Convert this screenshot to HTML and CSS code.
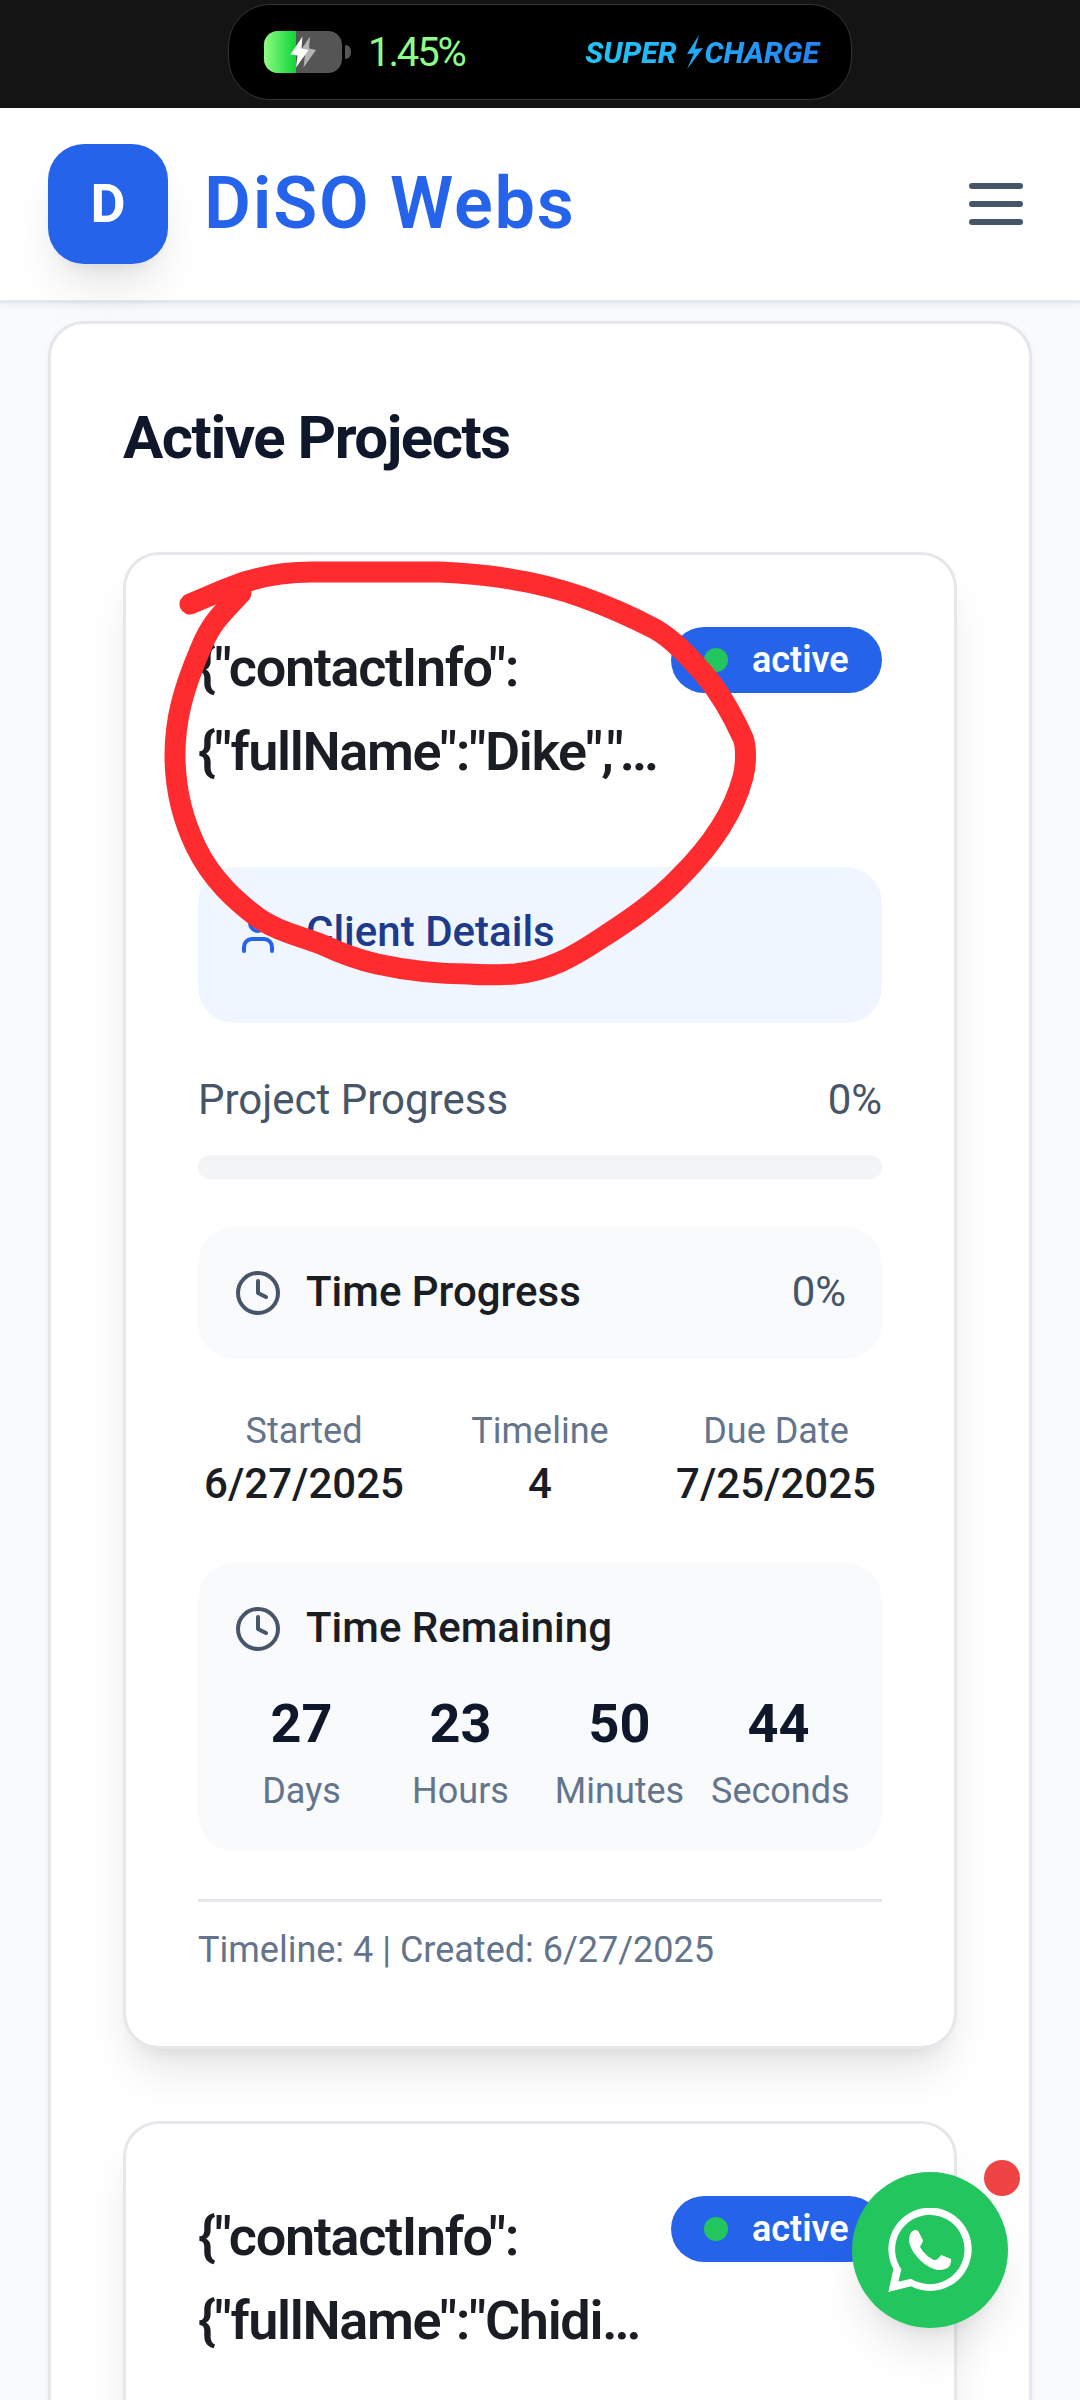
FILE: index.html
```html
<!DOCTYPE html>
<html lang="en">
<head>
<meta charset="utf-8">
<title>DiSO Webs</title>
<link rel="stylesheet" href="styles.css">
</head>
<body>
<div class="screen">
  <div class="status">
    <div class="pill">
      <svg class="battery" width="88" height="42" viewBox="0 0 88 42">
        <defs>
          <linearGradient id="charge"><stop offset="0" stop-color="#8dfc82"/><stop offset="1" stop-color="#10d43a"/></linearGradient>
          <clipPath id="shell"><rect width="78" height="42" rx="14"/></clipPath>
        </defs>
        <g clip-path="url(#shell)"><rect width="78" height="42" fill="#555"/><rect width="32" height="42" fill="url(#charge)"/></g>
        <path d="M81 14q6 0 6 7t-6 7z" fill="#555"/>
        <path d="M46 5.500L34 23.500L41 24.500L39.500 36.500L52 19L45 17.500Z" fill="#b4b4b4"/>
        <path d="M38.500 5.500L26.500 23.500L33.500 24.500L32 36.500L44.500 19L37.500 17.500Z" fill="#fff"/>
      </svg>
      <span class="percent">1.45%</span>
      <span class="super"><span class="super-a">SUPER</span><svg width="18" height="34" viewBox="0 0 18 34"><path d="M13 0L1 19L8 18.500L1 34L17 13L9 14Z" fill="#22aaf6"/></svg><span class="super-b">CHARGE</span></span>
    </div>
  </div>

  <header class="header">
    <div class="logo">D</div>
    <div class="brand">DiSO Webs</div>
    <div class="menu"><i></i><i></i><i></i></div>
  </header>

  <main class="main">
    <section class="panel">
      <h2 class="panel-title">Active Projects</h2>

      <article class="card">
        <div class="card-head">
          <h3 class="card-title">{"contactInfo":<br>{"fullName":"Dike","<span class="tail">…</span></h3>
          <span class="badge"><i class="dot"></i>active</span>
        </div>
        <div class="client">
          <div class="row">
            <svg class="icon user" viewBox="0 0 24 24"><path d="M19 21v-2a4 4 0 0 0-4-4H9a4 4 0 0 0-4 4v2"/><circle cx="12" cy="7" r="4"/></svg>
            <span>Client Details</span>
          </div>
        </div>
        <div class="progress">
          <div class="between"><span>Project Progress</span><span>0%</span></div>
          <div class="track"></div>
        </div>
        <div class="box">
          <div class="row">
            <svg class="icon" viewBox="0 0 24 24"><circle cx="12" cy="12" r="10"/><path d="M12 6v6l4 2"/></svg>
            <span class="strong">Time Progress</span><span class="value">0%</span>
          </div>
        </div>
        <div class="dates">
          <div><div class="label">Started</div><div class="date">6/27/2025</div></div>
          <div><div class="label">Timeline</div><div class="date">4</div></div>
          <div><div class="label">Due Date</div><div class="date">7/25/2025</div></div>
        </div>
        <div class="box">
          <div class="row">
            <svg class="icon" viewBox="0 0 24 24"><circle cx="12" cy="12" r="10"/><path d="M12 6v6l4 2"/></svg>
            <span class="strong">Time Remaining</span>
          </div>
          <div class="countdown">
            <div><div class="num">27</div><div class="label">Days</div></div>
            <div><div class="num">23</div><div class="label">Hours</div></div>
            <div><div class="num">50</div><div class="label">Minutes</div></div>
            <div><div class="num">44</div><div class="label">Seconds</div></div>
          </div>
        </div>
        <div class="card-foot">Timeline: 4 | Created: 6/27/2025</div>
      </article>

      <article class="card">
        <div class="card-head">
          <h3 class="card-title">{"contactInfo":<br>{"fullName":"Chidi…</h3>
          <span class="badge"><i class="dot"></i>active</span>
        </div>
      </article>
    </section>
  </main>

  <svg class="scribble" width="620" height="460" viewBox="150 545 620 460">
    <path d="M190 604C215 594 232 585 252 580C272 574 292 572 312 572H439C490 574 540 582 582 597C610 607 632 617 655 629C674 640 688 656 704 674C722 695 734 718 743 738Q745.500 744 745.500 755Q745.500 768 743 777C734 812 712 845 680 877C655 903 628 921 600 939C573 957 548 971 515 974C498 975 480 975 468 974C435 974 400 969 377 964C355 959 340 953 323 945C300 936 276 931 257 917C236 901 212 880 196 847C182 818 175 785 175 755C175 720 183 690 200 650C212 620 224 612 241 593"/>
  </svg>

  <div class="chat">
    <svg width="84" height="84" viewBox="24 24 252 252" fill="#fff">
      <path fill-rule="evenodd" d="M25 276L40 207A125 125 0 1 1 93 259ZM55 245L93 236A104 104 0 1 0 64 208Z"/>
      <path d="M98 93Q107 87 115 94L129 121Q129 126 120 140Q134 166 160 179Q168 181 172 178L184 165L213 177Q214 198 201 205Q186 212 170 209C134 202 93 160 87 124Q86 102 98 93Z"/>
    </svg>
    <i class="alert"></i>
  </div>
</div>
</body>
</html>
```
FILE: styles.css
```css
* { box-sizing: border-box; margin: 0; }
body { background: #f8fafc; font-family: Roboto, "Liberation Sans", sans-serif; color: #1a1d23; }
.screen { position: relative; width: 1080px; height: 2400px; overflow: hidden; display: flex; flex-direction: column; }
svg { display: block; flex: none; }

.status { flex: none; height: 108px; background: #141414; display: flex; justify-content: center; padding-top: 4px; }
.pill { width: 624px; height: 96px; background: #000; border: 1.500px solid #30343b; border-radius: 42px; display: flex; align-items: center; padding: 0 30px 0 35px; }
.percent { margin-left: 16px; color: #8efc86; font-size: 40px; font-weight: 450; letter-spacing: -2.100px; }
.super { margin-left: auto; display: flex; align-items: center; font-size: 30px; font-weight: 800; font-style: italic; }
.super svg { margin: 0 1px 0 9px; }
.super-a, .super-b { color: transparent; background-clip: text; -webkit-background-clip: text; }
.super-a { background-image: linear-gradient(90deg, #20c6f6, #22b4f8); }
.super-b { background-image: linear-gradient(90deg, #22a8f6, #2382f2); padding-right: 2px; }

.header { position: relative; z-index: 2; flex: none; height: 195px; background: #fff; border-bottom: 3px solid #e2e8f0; box-shadow: 0 3px 6px rgba(0,0,0,.05); display: flex; align-items: center; padding: 0 57px 0 48px; }
.logo { width: 120px; height: 120px; border-radius: 36px; background: #2563eb; color: #fff; font-size: 54px; font-weight: 700; display: flex; align-items: center; justify-content: center; padding-bottom: 2px; box-shadow: 0 30px 45px -9px rgba(0,0,0,.1), 0 12px 18px -12px rgba(0,0,0,.1); }
.brand { margin-left: 36px; padding-bottom: 2px; color: #2563eb; font-size: 72px; font-weight: 600; letter-spacing: 1.800px; }
.menu { margin-left: auto; display: flex; flex-direction: column; gap: 12px; }
.menu i { width: 54px; height: 6px; border-radius: 3px; background: #475569; }

.main { flex: none; padding: 18px 48px 0; }
.panel { background: #fff; border: 3px solid #e5e7eb; border-radius: 36px; box-shadow: 0 3px 6px rgba(0,0,0,.05); padding: 72px; display: flex; flex-direction: column; gap: 72px; }
.panel-title { font-size: 60px; line-height: 84px; font-weight: 700; letter-spacing: -1.500px; color: #0f172a; }
.card { min-height: 400px; border: 3px solid #e5e7eb; border-radius: 36px; background: #fff; padding: 72px; box-shadow: 0 30px 45px -9px rgba(0,0,0,.1), 0 12px 18px -12px rgba(0,0,0,.1); }
.card-head { display: flex; justify-content: space-between; align-items: flex-start; margin-bottom: 72px; }
.card-title { margin: -1px 0 1px; font-size: 54px; line-height: 84px; font-weight: 600; letter-spacing: -1.350px; white-space: nowrap; }
.tail { margin-left: -3px; }
.badge { width: 211px; height: 66px; border-radius: 33px; background: #2563eb; color: #fff; font-size: 36px; line-height: 48px; font-weight: 600; display: flex; align-items: center; padding-left: 33px; }
.dot { width: 24px; height: 24px; border-radius: 50%; background: #22c55e; margin-right: 24px; }
.client, .box { border-radius: 36px; padding: 36px; font-size: 42px; line-height: 58px; }
.client { background: #eff6ff; height: 156px; color: #1e3a8a; font-weight: 500; }
.box { background: #f8fafc; }
.row { display: flex; align-items: center; gap: 24px; }
.row span, .between span { padding-bottom: 2px; }
.icon { width: 48px; height: 48px; fill: none; stroke: #475569; stroke-width: 2; stroke-linecap: round; stroke-linejoin: round; }
.user { stroke: #2563eb; }
.strong { font-weight: 500; }
.value { margin-left: auto; color: #475569; }
.progress { margin: 48px 0; color: #475569; font-size: 42px; line-height: 58px; }
.between { display: flex; justify-content: space-between; }
.track { margin-top: 24px; height: 24px; border-radius: 12px; background: #f3f4f6; }
.dates { margin: 48px 0; display: grid; grid-template-columns: repeat(3, minmax(0, 1fr)); gap: 24px; text-align: center; }
.label { color: #64748b; font-size: 36px; line-height: 48px; }
.date { padding-bottom: 2px; font-size: 42px; line-height: 58px; font-weight: 500; }
.countdown { margin-top: 24px; display: grid; grid-template-columns: repeat(4, minmax(0, 1fr)); gap: 24px; text-align: center; }
.num { padding-bottom: 2px; font-size: 54px; line-height: 82px; font-weight: 700; color: #0f172a; }
.card-foot { margin-top: 48px; padding-top: 24px; border-top: 3px solid #e5e7eb; font-size: 36px; line-height: 48px; color: #64748b; }

.scribble { position: absolute; left: 150px; top: 545px; fill: none; stroke: #ff2c2f; stroke-width: 21; stroke-linecap: round; stroke-linejoin: round; }
.chat { position: absolute; left: 852px; top: 2172px; width: 156px; height: 156px; border-radius: 50%; background: #22c55e; display: flex; align-items: center; justify-content: center; box-shadow: 0 30px 45px -9px rgba(0,0,0,.1), 0 12px 18px -12px rgba(0,0,0,.1); }
.alert { position: absolute; right: -12px; top: -12px; width: 36px; height: 36px; border-radius: 50%; background: #ef4444; }
```
